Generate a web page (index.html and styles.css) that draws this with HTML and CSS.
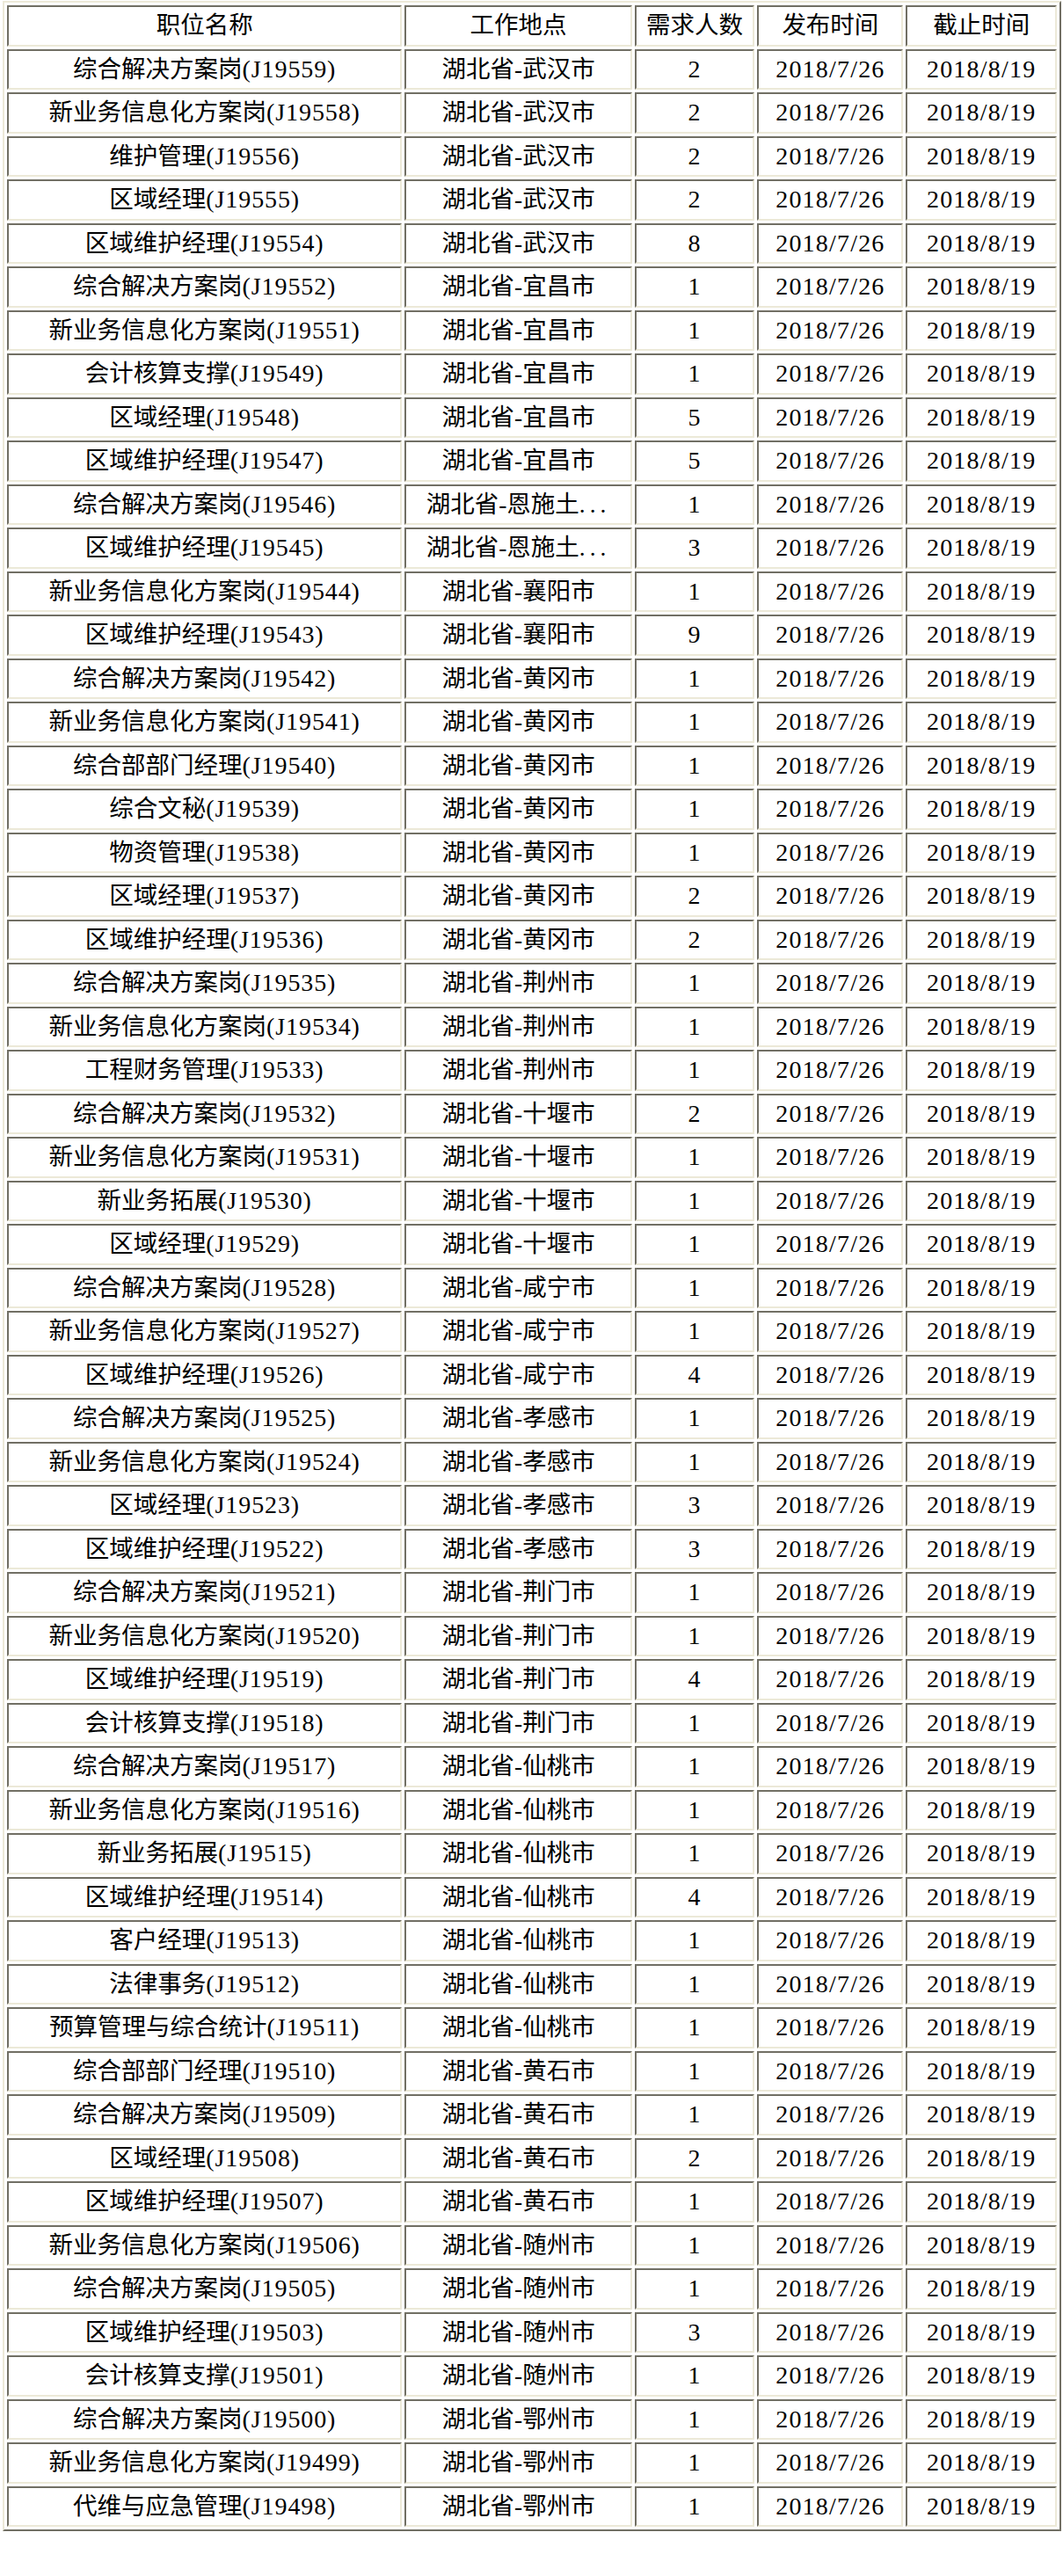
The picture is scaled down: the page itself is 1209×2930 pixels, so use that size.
FILE: index.html
```html
<!DOCTYPE html>
<html lang="zh-CN">
<head>
<meta charset="utf-8">
<title>职位列表</title>
<link rel="stylesheet" href="styles.css">
</head>
<body>
<table class="jobs">
<thead>
<tr><th class="c-name">职位名称</th><th class="c-place">工作地点</th><th class="c-num">需求人数</th><th class="c-pub">发布时间</th><th class="c-end">截止时间</th></tr>
</thead>
<tbody>
<tr><td>综合解决方案岗<span class="code">(J19559)</span></td><td>湖北省-武汉市</td><td class="en">2</td><td class="en">2018/7/26</td><td class="en">2018/8/19</td></tr>
<tr><td>新业务信息化方案岗<span class="code">(J19558)</span></td><td>湖北省-武汉市</td><td class="en">2</td><td class="en">2018/7/26</td><td class="en">2018/8/19</td></tr>
<tr><td>维护管理<span class="code">(J19556)</span></td><td>湖北省-武汉市</td><td class="en">2</td><td class="en">2018/7/26</td><td class="en">2018/8/19</td></tr>
<tr><td>区域经理<span class="code">(J19555)</span></td><td>湖北省-武汉市</td><td class="en">2</td><td class="en">2018/7/26</td><td class="en">2018/8/19</td></tr>
<tr><td>区域维护经理<span class="code">(J19554)</span></td><td>湖北省-武汉市</td><td class="en">8</td><td class="en">2018/7/26</td><td class="en">2018/8/19</td></tr>
<tr><td>综合解决方案岗<span class="code">(J19552)</span></td><td>湖北省-宜昌市</td><td class="en">1</td><td class="en">2018/7/26</td><td class="en">2018/8/19</td></tr>
<tr><td>新业务信息化方案岗<span class="code">(J19551)</span></td><td>湖北省-宜昌市</td><td class="en">1</td><td class="en">2018/7/26</td><td class="en">2018/8/19</td></tr>
<tr><td>会计核算支撑<span class="code">(J19549)</span></td><td>湖北省-宜昌市</td><td class="en">1</td><td class="en">2018/7/26</td><td class="en">2018/8/19</td></tr>
<tr><td>区域经理<span class="code">(J19548)</span></td><td>湖北省-宜昌市</td><td class="en">5</td><td class="en">2018/7/26</td><td class="en">2018/8/19</td></tr>
<tr><td>区域维护经理<span class="code">(J19547)</span></td><td>湖北省-宜昌市</td><td class="en">5</td><td class="en">2018/7/26</td><td class="en">2018/8/19</td></tr>
<tr><td>综合解决方案岗<span class="code">(J19546)</span></td><td>湖北省-恩施土<span class="dots">...</span></td><td class="en">1</td><td class="en">2018/7/26</td><td class="en">2018/8/19</td></tr>
<tr><td>区域维护经理<span class="code">(J19545)</span></td><td>湖北省-恩施土<span class="dots">...</span></td><td class="en">3</td><td class="en">2018/7/26</td><td class="en">2018/8/19</td></tr>
<tr><td>新业务信息化方案岗<span class="code">(J19544)</span></td><td>湖北省-襄阳市</td><td class="en">1</td><td class="en">2018/7/26</td><td class="en">2018/8/19</td></tr>
<tr><td>区域维护经理<span class="code">(J19543)</span></td><td>湖北省-襄阳市</td><td class="en">9</td><td class="en">2018/7/26</td><td class="en">2018/8/19</td></tr>
<tr><td>综合解决方案岗<span class="code">(J19542)</span></td><td>湖北省-黄冈市</td><td class="en">1</td><td class="en">2018/7/26</td><td class="en">2018/8/19</td></tr>
<tr><td>新业务信息化方案岗<span class="code">(J19541)</span></td><td>湖北省-黄冈市</td><td class="en">1</td><td class="en">2018/7/26</td><td class="en">2018/8/19</td></tr>
<tr><td>综合部部门经理<span class="code">(J19540)</span></td><td>湖北省-黄冈市</td><td class="en">1</td><td class="en">2018/7/26</td><td class="en">2018/8/19</td></tr>
<tr><td>综合文秘<span class="code">(J19539)</span></td><td>湖北省-黄冈市</td><td class="en">1</td><td class="en">2018/7/26</td><td class="en">2018/8/19</td></tr>
<tr><td>物资管理<span class="code">(J19538)</span></td><td>湖北省-黄冈市</td><td class="en">1</td><td class="en">2018/7/26</td><td class="en">2018/8/19</td></tr>
<tr><td>区域经理<span class="code">(J19537)</span></td><td>湖北省-黄冈市</td><td class="en">2</td><td class="en">2018/7/26</td><td class="en">2018/8/19</td></tr>
<tr><td>区域维护经理<span class="code">(J19536)</span></td><td>湖北省-黄冈市</td><td class="en">2</td><td class="en">2018/7/26</td><td class="en">2018/8/19</td></tr>
<tr><td>综合解决方案岗<span class="code">(J19535)</span></td><td>湖北省-荆州市</td><td class="en">1</td><td class="en">2018/7/26</td><td class="en">2018/8/19</td></tr>
<tr><td>新业务信息化方案岗<span class="code">(J19534)</span></td><td>湖北省-荆州市</td><td class="en">1</td><td class="en">2018/7/26</td><td class="en">2018/8/19</td></tr>
<tr><td>工程财务管理<span class="code">(J19533)</span></td><td>湖北省-荆州市</td><td class="en">1</td><td class="en">2018/7/26</td><td class="en">2018/8/19</td></tr>
<tr><td>综合解决方案岗<span class="code">(J19532)</span></td><td>湖北省-十堰市</td><td class="en">2</td><td class="en">2018/7/26</td><td class="en">2018/8/19</td></tr>
<tr><td>新业务信息化方案岗<span class="code">(J19531)</span></td><td>湖北省-十堰市</td><td class="en">1</td><td class="en">2018/7/26</td><td class="en">2018/8/19</td></tr>
<tr><td>新业务拓展<span class="code">(J19530)</span></td><td>湖北省-十堰市</td><td class="en">1</td><td class="en">2018/7/26</td><td class="en">2018/8/19</td></tr>
<tr><td>区域经理<span class="code">(J19529)</span></td><td>湖北省-十堰市</td><td class="en">1</td><td class="en">2018/7/26</td><td class="en">2018/8/19</td></tr>
<tr><td>综合解决方案岗<span class="code">(J19528)</span></td><td>湖北省-咸宁市</td><td class="en">1</td><td class="en">2018/7/26</td><td class="en">2018/8/19</td></tr>
<tr><td>新业务信息化方案岗<span class="code">(J19527)</span></td><td>湖北省-咸宁市</td><td class="en">1</td><td class="en">2018/7/26</td><td class="en">2018/8/19</td></tr>
<tr><td>区域维护经理<span class="code">(J19526)</span></td><td>湖北省-咸宁市</td><td class="en">4</td><td class="en">2018/7/26</td><td class="en">2018/8/19</td></tr>
<tr><td>综合解决方案岗<span class="code">(J19525)</span></td><td>湖北省-孝感市</td><td class="en">1</td><td class="en">2018/7/26</td><td class="en">2018/8/19</td></tr>
<tr><td>新业务信息化方案岗<span class="code">(J19524)</span></td><td>湖北省-孝感市</td><td class="en">1</td><td class="en">2018/7/26</td><td class="en">2018/8/19</td></tr>
<tr><td>区域经理<span class="code">(J19523)</span></td><td>湖北省-孝感市</td><td class="en">3</td><td class="en">2018/7/26</td><td class="en">2018/8/19</td></tr>
<tr><td>区域维护经理<span class="code">(J19522)</span></td><td>湖北省-孝感市</td><td class="en">3</td><td class="en">2018/7/26</td><td class="en">2018/8/19</td></tr>
<tr><td>综合解决方案岗<span class="code">(J19521)</span></td><td>湖北省-荆门市</td><td class="en">1</td><td class="en">2018/7/26</td><td class="en">2018/8/19</td></tr>
<tr><td>新业务信息化方案岗<span class="code">(J19520)</span></td><td>湖北省-荆门市</td><td class="en">1</td><td class="en">2018/7/26</td><td class="en">2018/8/19</td></tr>
<tr><td>区域维护经理<span class="code">(J19519)</span></td><td>湖北省-荆门市</td><td class="en">4</td><td class="en">2018/7/26</td><td class="en">2018/8/19</td></tr>
<tr><td>会计核算支撑<span class="code">(J19518)</span></td><td>湖北省-荆门市</td><td class="en">1</td><td class="en">2018/7/26</td><td class="en">2018/8/19</td></tr>
<tr><td>综合解决方案岗<span class="code">(J19517)</span></td><td>湖北省-仙桃市</td><td class="en">1</td><td class="en">2018/7/26</td><td class="en">2018/8/19</td></tr>
<tr><td>新业务信息化方案岗<span class="code">(J19516)</span></td><td>湖北省-仙桃市</td><td class="en">1</td><td class="en">2018/7/26</td><td class="en">2018/8/19</td></tr>
<tr><td>新业务拓展<span class="code">(J19515)</span></td><td>湖北省-仙桃市</td><td class="en">1</td><td class="en">2018/7/26</td><td class="en">2018/8/19</td></tr>
<tr><td>区域维护经理<span class="code">(J19514)</span></td><td>湖北省-仙桃市</td><td class="en">4</td><td class="en">2018/7/26</td><td class="en">2018/8/19</td></tr>
<tr><td>客户经理<span class="code">(J19513)</span></td><td>湖北省-仙桃市</td><td class="en">1</td><td class="en">2018/7/26</td><td class="en">2018/8/19</td></tr>
<tr><td>法律事务<span class="code">(J19512)</span></td><td>湖北省-仙桃市</td><td class="en">1</td><td class="en">2018/7/26</td><td class="en">2018/8/19</td></tr>
<tr><td>预算管理与综合统计<span class="code">(J19511)</span></td><td>湖北省-仙桃市</td><td class="en">1</td><td class="en">2018/7/26</td><td class="en">2018/8/19</td></tr>
<tr><td>综合部部门经理<span class="code">(J19510)</span></td><td>湖北省-黄石市</td><td class="en">1</td><td class="en">2018/7/26</td><td class="en">2018/8/19</td></tr>
<tr><td>综合解决方案岗<span class="code">(J19509)</span></td><td>湖北省-黄石市</td><td class="en">1</td><td class="en">2018/7/26</td><td class="en">2018/8/19</td></tr>
<tr><td>区域经理<span class="code">(J19508)</span></td><td>湖北省-黄石市</td><td class="en">2</td><td class="en">2018/7/26</td><td class="en">2018/8/19</td></tr>
<tr><td>区域维护经理<span class="code">(J19507)</span></td><td>湖北省-黄石市</td><td class="en">1</td><td class="en">2018/7/26</td><td class="en">2018/8/19</td></tr>
<tr><td>新业务信息化方案岗<span class="code">(J19506)</span></td><td>湖北省-随州市</td><td class="en">1</td><td class="en">2018/7/26</td><td class="en">2018/8/19</td></tr>
<tr><td>综合解决方案岗<span class="code">(J19505)</span></td><td>湖北省-随州市</td><td class="en">1</td><td class="en">2018/7/26</td><td class="en">2018/8/19</td></tr>
<tr><td>区域维护经理<span class="code">(J19503)</span></td><td>湖北省-随州市</td><td class="en">3</td><td class="en">2018/7/26</td><td class="en">2018/8/19</td></tr>
<tr><td>会计核算支撑<span class="code">(J19501)</span></td><td>湖北省-随州市</td><td class="en">1</td><td class="en">2018/7/26</td><td class="en">2018/8/19</td></tr>
<tr><td>综合解决方案岗<span class="code">(J19500)</span></td><td>湖北省-鄂州市</td><td class="en">1</td><td class="en">2018/7/26</td><td class="en">2018/8/19</td></tr>
<tr><td>新业务信息化方案岗<span class="code">(J19499)</span></td><td>湖北省-鄂州市</td><td class="en">1</td><td class="en">2018/7/26</td><td class="en">2018/8/19</td></tr>
<tr><td>代维与应急管理<span class="code">(J19498)</span></td><td>湖北省-鄂州市</td><td class="en">1</td><td class="en">2018/7/26</td><td class="en">2018/8/19</td></tr>
</tbody>
</table>
</body>
</html>
```
FILE: styles.css
```css
html, body {
  margin: 0;
  padding: 0;
  background: #ffffff;
}

.jobs {
  margin: 1px 0 0 3px;
  width: 1204px;
  table-layout: fixed;
  border-collapse: separate;
  border-spacing: 3.75px;
  border: 2px solid;
  border-color: #ECE9D8 #716F64 #716F64 #ECE9D8;
  font-family: "Liberation Serif", "Noto Sans CJK SC", serif;
  font-size: 27.5px;
  color: #000000;
}

.jobs th,
.jobs td {
  box-sizing: border-box;
  height: 46.5px;
  padding: 0;
  border: 2px solid;
  border-color: #716F64 #ECE9D8 #ECE9D8 #716F64;
  background: #ffffff;
  text-align: center;
  vertical-align: middle;
  font-weight: normal;
  line-height: 28px;
  white-space: nowrap;
  overflow: hidden;
}

.jobs .en,
.jobs .code {
  font-size: 28px;
  letter-spacing: 1.2px;
}

.jobs .code {
  letter-spacing: 0.9px;
}

.jobs .dots {
  letter-spacing: 5px;
}

.c-name { width: 447.75px; }
.c-place { width: 257.25px; }
.c-num { width: 136.25px; }
.c-pub { width: 165.25px; }
.c-end { width: 171px; }
```
